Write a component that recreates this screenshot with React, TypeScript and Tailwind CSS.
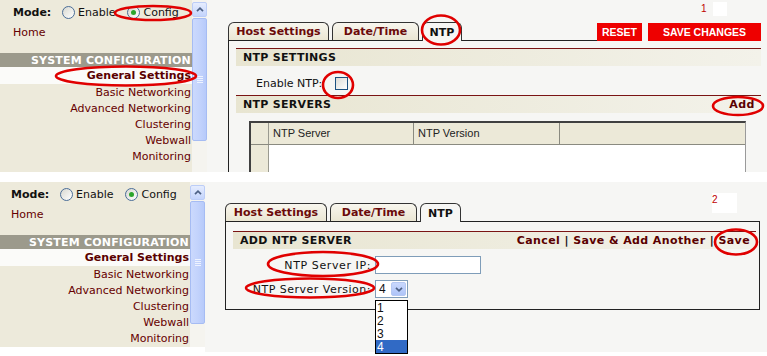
import React from "react";

function Radio({ checked }: { checked?: boolean }) {
  return (
    <span className="inline-flex w-[13px] h-[13px] shrink-0 rounded-full border border-[#4a6d98] bg-gradient-to-br from-[#d8d8d0] to-white items-center justify-center">
      {checked && <span className="w-[5px] h-[5px] rounded-full bg-[#2ca52c]" />}
    </span>
  );
}

function Sidebar({ bottom }: { bottom?: boolean }) {
  const links = ["Basic Networking", "Advanced Networking", "Clustering", "Webwall", "Monitoring"];
  return (
    <div className={bottom ? "w-[190px] h-[165px] bg-[#EDEADB] flex flex-col" : "w-[192px] h-full bg-[#EDEADB] flex flex-col"}>
      <div className={bottom ? "h-[24px] flex items-center pl-[11px]" : "h-[24px] flex items-center pl-[13px]"}>
        <span className="font-bold text-[#111] w-[49px]">Mode:</span>
        <Radio />
        <span className="ml-[3px] text-[#111]">Enable</span>
        <span className="ml-[12px]" />
        <Radio checked />
        <span className="ml-[3px] text-[#111]">Config</span>
      </div>
      <div className={bottom ? "h-[16px] flex items-center pl-[11px] text-[#660000]" : "h-[16px] flex items-center pl-[13px] text-[#660000]"}>Home</div>
      <div className="mt-[13px] h-[14px] bg-[#9C9A8C] flex items-center justify-end overflow-hidden whitespace-nowrap pr-[1px] font-bold text-white tracking-[0.2px]">
        SYSTEM CONFIGURATION
      </div>
      <div className="h-[17px] bg-[#FBFBF9] flex items-center justify-end pr-[1px] font-bold text-[#5a0000]">General Settings</div>
      {links.map((l) => (
        <div key={l} className="h-[16px] flex items-center justify-end pr-[1px] text-[#660000]">
          {l}
        </div>
      ))}
    </div>
  );
}

function Scrollbar({ bottom }: { bottom?: boolean }) {
  return (
    <div className={bottom ? "w-[15px] h-[165px] bg-[#F5F4EF] flex flex-col pt-[3px] gap-[1px]" : "w-[15px] h-full bg-[#F5F4EF] flex flex-col pt-[2px] gap-[1px]"}>
      <div className="h-[15px] rounded-[2px] border border-[#bccdf7] bg-gradient-to-b from-[#e6edfe] to-[#c4d4fc] flex items-center justify-center">
        <svg width="8" height="5" viewBox="0 0 8 5">
          <path d="M1 4.2 L4 1.2 L7 4.2" stroke="#4d6185" strokeWidth="1.7" fill="none" />
        </svg>
      </div>
      <div className="h-[123px] rounded-[2px] border border-[#a6bcf3] bg-gradient-to-r from-[#cbd9fd] via-[#c3d3fc] to-[#b7cafa] flex items-center justify-center">
        <div className="flex flex-col gap-[1px]">
          <div className="w-[6px] h-[1px] bg-[#eef3ff]" />
          <div className="w-[6px] h-[1px] bg-[#eef3ff]" />
          <div className="w-[6px] h-[1px] bg-[#eef3ff]" />
          <div className="w-[6px] h-[1px] bg-[#eef3ff]" />
        </div>
      </div>
    </div>
  );
}

function Tab({ label, active, cls }: { label: string; active?: boolean; cls: string }) {
  return (
    <div
      className={
        active
          ? `${cls} h-[19px] -mb-px rounded-t-[6px] border border-b-0 border-[#333] bg-[#F6F6F4] flex items-center justify-center font-bold text-[#111]`
          : `${cls} h-[18px] rounded-t-[6px] border border-b-0 border-[#333] bg-gradient-to-b from-[#F8F6EE] to-[#EAE6D3] flex items-center justify-center font-bold text-[#6B0A0A]`
      }
    >
      {label}
    </div>
  );
}

function Header({ title, right }: { title: string; right?: React.ReactNode }) {
  return (
    <div className="h-[18px] border-t border-[#7a1414] bg-gradient-to-r from-[#E8E5D1] to-[#F3F2EA] flex items-center justify-between pl-[7px] pr-[6px]">
      <span className="font-bold text-[#111] tracking-[0.3px]">{title}</span>
      {right}
    </div>
  );
}

function TopMain() {
  return (
    <div className="flex-1 h-full bg-[#F6F6F4] pl-[21px] pt-[22px] pr-[6px] flex flex-col">
      <div className="flex items-end">
        <div className="flex-1 h-[19px] flex items-end gap-[3px] border-b border-[#222]">
          <Tab cls="w-[101px]" label="Host Settings" />
          <Tab cls="w-[87px]" label="Date/Time" />
          <Tab cls="w-[40px]" label="NTP" active />
        </div>
        <div className="w-[45px] h-[18px] bg-[#EE0000] text-white font-bold text-[10.5px] [font-family:'Liberation_Sans',Arial,sans-serif] flex items-center justify-center">
          RESET
        </div>
        <div className="ml-[6px] w-[113px] h-[18px] bg-[#EE0000] text-white font-bold text-[10.5px] [font-family:'Liberation_Sans',Arial,sans-serif] flex items-center justify-center">
          SAVE CHANGES
        </div>
      </div>
      <div className="flex-1 border-l border-[#222] pl-[7px] pt-[7px] flex flex-col overflow-hidden">
        <Header title="NTP SETTINGS" />
        <div className="mt-[8px] h-[18px] flex items-center pl-[20px]">
          <span className="text-[#111]">Enable NTP:</span>
          <span className="ml-[13px] w-[13px] h-[13px] border border-[#1c5180] bg-gradient-to-br from-[#dcdcd6] to-white" />
        </div>
        <div className="mt-[3px]">
          <Header title="NTP SERVERS" right={<span className="font-bold text-[#5a0000] tracking-[0.5px]">Add</span>} />
        </div>
        <div className="mt-[8px] ml-[13px] w-[497px] flex-1 border-t-2 border-l-2 border-[#404040] border-r border-r-[#9a9a9a] bg-white flex flex-col">
          <div className="h-[22px] flex bg-[#ECE9D8] border-b border-[#8a8a80] [font-family:'Liberation_Sans',Arial,sans-serif] text-[11px] text-[#222]">
            <div className="w-[18px] border-r border-[#9a9a90]" />
            <div className="w-[145px] border-r border-[#8a8a80] pl-[4px] flex items-center">NTP Server</div>
            <div className="w-[146px] border-r border-[#8a8a80] pl-[4px] flex items-center">NTP Version</div>
            <div className="flex-1" />
          </div>
          <div className="flex-1 flex">
            <div className="w-[18px] bg-[#ECE9D8] border-r border-[#9a9a90]" />
            <div className="flex-1" />
          </div>
        </div>
      </div>
    </div>
  );
}

function BottomMain() {
  return (
    <div className="flex-1 h-full bg-[#F6F6F4] pl-[20px] pt-[21px] pr-[7px] flex flex-col">
      <div className="h-[19px] flex items-end gap-[3px] border-b border-[#222]">
        <Tab cls="w-[102px]" label="Host Settings" />
        <Tab cls="w-[87px]" label="Date/Time" />
        <Tab cls="w-[41px]" label="NTP" active />
      </div>
      <div className="border-l border-r border-b border-[#222] pl-[7px] pr-[3px] pt-[9px] pb-[11px] flex flex-col">
        <Header
          title="ADD NTP SERVER"
          right={
            <span className="font-bold text-[#5a0000] tracking-[0.4px]">
              Cancel <span className="text-[#111]">|</span> Save &amp; Add Another <span className="text-[#111]">|</span> Save
            </span>
          }
        />
        <div className="mt-[7px] h-[18px] flex items-center -ml-[7px]">
          <span className="w-[146px] text-right pr-[1px] text-[#111] tracking-[0.6px]">NTP Server IP:</span>
          <span className="ml-[3px] w-[106px] h-[18px] border border-[#7f9db9] bg-white" />
        </div>
        <div className="mt-[6px] h-[18px] flex items-center -ml-[7px]">
          <span className="w-[146px] text-right pr-[1px] text-[#111] tracking-[0.5px]">NTP Server Version:</span>
          <div className="ml-[3px] relative">
            <div className="w-[33px] h-[18px] border border-[#7f9db9] bg-white flex items-center justify-between pl-[3px] pr-[1px]">
              <span className="[font-family:'Liberation_Sans',Arial,sans-serif] text-[12px] text-[#111]">4</span>
              <span className="w-[15px] h-[14px] rounded-[2px] border border-[#b5c8f2] bg-gradient-to-b from-[#c9d8fd] to-[#aec4f8] flex items-center justify-center">
                <svg width="8" height="5" viewBox="0 0 8 5">
                  <path d="M1 0.8 L4 3.8 L7 0.8" stroke="#4d6185" strokeWidth="1.7" fill="none" />
                </svg>
              </span>
            </div>
            <div className="absolute left-0 top-[20px] w-[33px] border border-black bg-white flex flex-col [font-family:'Liberation_Sans',Arial,sans-serif] text-[12px] text-[#111] z-10">
              <div className="h-[13px] pl-[1px] flex items-center">1</div>
              <div className="h-[13px] pl-[1px] flex items-center">2</div>
              <div className="h-[13px] pl-[1px] flex items-center">3</div>
              <div className="h-[13px] pl-[1px] flex items-center bg-[#316AC5] text-white">4</div>
            </div>
          </div>
        </div>
      </div>
    </div>
  );
}

function Annotations() {
  return (
    <>
      <svg className="absolute left-0 top-0 pointer-events-none z-20" width="767" height="356" viewBox="0 0 767 356">
        <g fill="none" stroke="#E00000" strokeWidth="2.6">
          <ellipse cx="153" cy="13" rx="38" ry="7" />
          <ellipse cx="126" cy="76" rx="70" ry="9.5" />
          <ellipse cx="441" cy="30" rx="19" ry="14.5" />
          <ellipse cx="338" cy="85" rx="15" ry="13" />
          <ellipse cx="738" cy="106" rx="25" ry="9" />
          <ellipse cx="323" cy="264" rx="55" ry="12" />
          <ellipse cx="310" cy="288" rx="64" ry="9.5" />
          <ellipse cx="736" cy="242" rx="21" ry="12.5" />
        </g>
      </svg>
      <div className="absolute left-[713px] top-[2px] w-[14px] h-[14px] bg-white" />
      <div className="absolute left-[701px] top-[4px] text-[#C00000] text-[10px] [font-family:'Liberation_Sans',Arial,sans-serif]">1</div>
      <div className="absolute left-[712px] top-[193px] w-[25px] h-[20px] bg-white" />
      <div className="absolute left-[712px] top-[195px] text-[#C00000] text-[10px] [font-family:'Liberation_Sans',Arial,sans-serif]">2</div>
    </>
  );
}

export default function App() {
  return (
    <div className="relative w-[767px] h-[356px] overflow-hidden bg-white [font-family:'DejaVu_Sans',Verdana,sans-serif] text-[11px] leading-none text-[#222]">
      <div className="flex flex-col gap-[10px]">
        <div className="h-[172px] flex">
          <Sidebar />
          <Scrollbar />
          <TopMain />
        </div>
        <div className="h-[170px] flex">
          <Sidebar bottom />
          <Scrollbar bottom />
          <BottomMain />
        </div>
      </div>
      <Annotations />
    </div>
  );
}
